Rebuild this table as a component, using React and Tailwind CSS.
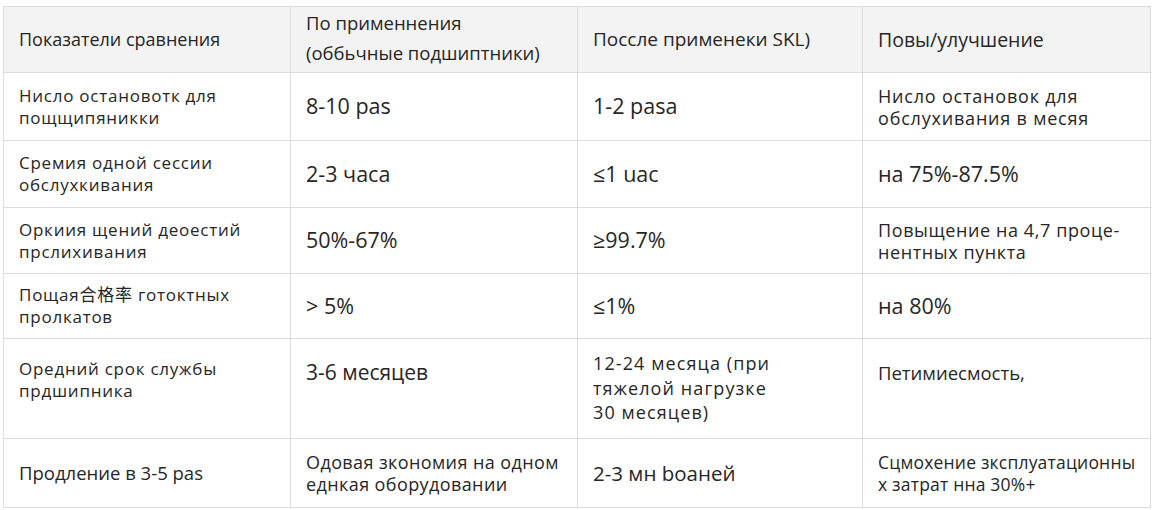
import React from 'react';

const c1 = 'text-[17px] tracking-[0.75px] leading-[22px]';

const rows = [
    {
        h: 'h-[68px]',
        cells: [
            { t: ['Нисло остановотк для', 'пощщипяникки'], s: c1 },
            { t: ['8-10 pas'], s: 'text-[21.5px]' },
            { t: ['1-2 pasa'], s: 'text-[21.5px]' },
            { t: ['Нисло остановок для', 'обслухивания в месяя'], s: 'text-[18px] tracking-[0.8px] leading-[22px]' },
        ],
    },
    {
        h: 'h-[67px]',
        cells: [
            { t: ['Сремия одной сессии', 'обслухкивания'], s: c1 },
            { t: ['2-3 часа'], s: 'text-[21.5px]' },
            { t: ['≤1 uac'], s: 'text-[21.5px]' },
            { t: ['на 75%-87.5%'], s: 'text-[21.5px]' },
        ],
    },
    {
        h: 'h-[66px]',
        cells: [
            { t: ['Оркиия щений деоестий', 'прслихивания'], s: c1 },
            { t: ['50%-67%'], s: 'text-[21.5px]' },
            { t: ['≥99.7%'], s: 'text-[21.5px]' },
            { t: ['Повыщение на 4,7 проце-', 'нентных пункта'], s: 'text-[18px] tracking-[0.6px] leading-[22px]' },
        ],
    },
    {
        h: 'h-[65px]',
        cells: [
            { t: ['Пощая合格率 готoктных', 'пролкатов'], s: c1 },
            { t: ['> 5%'], s: 'text-[21.5px]' },
            { t: ['≤1%'], s: 'text-[21.5px]' },
            { t: ['на 80%'], s: 'text-[21.5px]' },
        ],
    },
    {
        h: 'h-[100px]',
        top: true,
        cells: [
            { t: ['Оредний срок службы', 'прдшипника'], s: `${c1} pt-[19px]` },
            { t: ['3-6 месяцев'], s: 'text-[21px] pt-[18px]' },
            { t: ['12-24 месяца (при', 'тяжелой нагрузке', '30 месяцев)'], s: 'text-[18px] tracking-[1.1px] leading-[24.5px] pt-[12px]' },
            { t: ['Петимиесмость,'], s: 'text-[18.5px] pt-[20px]' },
        ],
    },
    {
        h: 'h-[69px]',
        cells: [
            { t: ['Продление в 3-5 pas'], s: 'text-[18.5px]' },
            { t: ['Одовая зкономия на одном', 'еднкая оборудовании'], s: 'text-[18px] tracking-[0.4px] leading-[22px]' },
            { t: ['2-3 мн bоаней'], s: 'text-[20.5px]' },
            { t: ['Сцмохение зксплуатационны', 'х затрат нна 30%+'], s: 'text-[17.5px] tracking-[0.2px] leading-[22px]' },
        ],
    },
];

const header = [
    { t: ['Показатели сравнения'], s: 'text-[18px]' },
    { t: ['По применнения', '(оббьчные подшиптники)'], s: 'text-[18.5px] leading-[30px] pb-[4px]' },
    { t: ['Поссле применеки SKL)'], s: 'text-[19px]' },
    { t: ['Повы/улучшение'], s: 'text-[19.5px]' },
];

const Cell = ({ cell, last, top, bg }) => (
    <div
        className={`flex ${top ? 'items-start' : 'items-center'} px-[15px] border-b border-[#dcdcdc] ${last ? '' : 'border-r'} ${bg} ${cell.s}`}
    >
        <div>
            {cell.t.map((line, i) => (
                <div key={i} className="whitespace-nowrap">{line}</div>
            ))}
        </div>
    </div>
);

export default function App() {
    return (
        <div className="w-[1155px] h-[510px] bg-white pt-[6px] pl-[3px] text-[#262626]" style={{ fontFamily: '"Open Sans", "Noto Sans", "Noto Sans CJK SC", sans-serif' }}>
            <div className="w-[1148px] border-t border-l border-r border-[#dcdcdc]">
                <div className="grid grid-cols-[287px_287px_285px_1fr] h-[66px]">
                    {header.map((c, i) => (
                        <Cell key={i} cell={c} last={i === 3} bg="bg-[#f3f3f3]" />
                    ))}
                </div>
                {rows.map((r, ri) => (
                    <div key={ri} className={`grid grid-cols-[287px_287px_285px_1fr] ${r.h}`}>
                        {r.cells.map((c, i) => (
                            <Cell key={i} cell={c} last={i === 3} top={r.top} bg="bg-white" />
                        ))}
                    </div>
                ))}
            </div>
        </div>
    );
}
